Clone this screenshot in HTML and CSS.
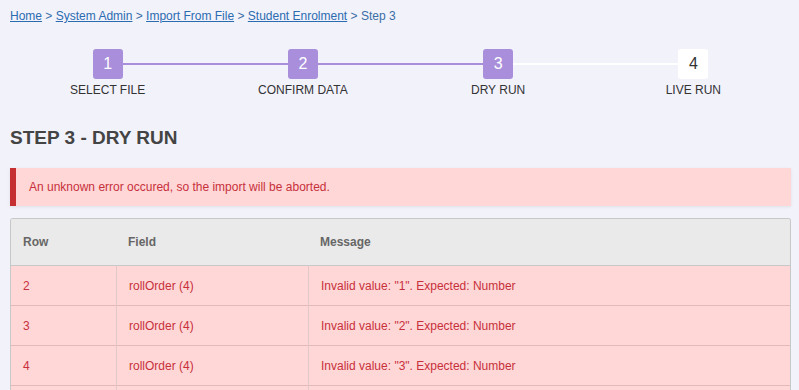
FILE: index.html
```html
<!DOCTYPE html>
<html lang="en">
<head>
    <meta charset="UTF-8">
    <meta name="viewport" content="width=device-width, initial-scale=1.0">
    <title>Import From File - Step 3</title>
    <link rel="stylesheet" href="styles.css">
</head>
<body>
    <div class="page">
        <div class="breadcrumb">
            <a href="#">Home</a> &gt; <a href="#">System Admin</a> &gt; <a href="#">Import From File</a> &gt; <a href="#">Student Enrolment</a> &gt; Step 3
        </div>

        <div class="steps">
            <div class="step done">
                <div class="step-num">1</div>
                <div class="step-label">Select File</div>
            </div>
            <div class="step done">
                <div class="step-num">2</div>
                <div class="step-label">Confirm Data</div>
            </div>
            <div class="step done">
                <div class="step-num">3</div>
                <div class="step-label">Dry Run</div>
            </div>
            <div class="step">
                <div class="step-num">4</div>
                <div class="step-label">Live Run</div>
            </div>
        </div>

        <h2 class="title">Step 3 - Dry Run</h2>

        <div class="alert">An unknown error occured, so the import will be aborted.</div>

        <table class="results">
            <thead>
                <tr>
                    <th class="col-row">Row</th>
                    <th class="col-field">Field</th>
                    <th>Message</th>
                </tr>
            </thead>
            <tbody>
                <tr>
                    <td>2</td>
                    <td>rollOrder (4)</td>
                    <td>Invalid value: "1". Expected: Number</td>
                </tr>
                <tr>
                    <td>3</td>
                    <td>rollOrder (4)</td>
                    <td>Invalid value: "2". Expected: Number</td>
                </tr>
                <tr>
                    <td>4</td>
                    <td>rollOrder (4)</td>
                    <td>Invalid value: "3". Expected: Number</td>
                </tr>
                <tr>
                    <td></td>
                    <td></td>
                    <td></td>
                </tr>
            </tbody>
        </table>
    </div>
</body>
</html>
```

FILE: styles.css
```css
body {
    margin: 0;
    background: #f2f2fb;
    color: #333;
    font-family: 'Liberation Sans', Arial, sans-serif;
    font-size: 12px;
}

.page {
    padding: 9px 8px 0 10px;
}

.breadcrumb {
    line-height: 14px;
    color: #3a6ea5;
}

.breadcrumb a {
    color: #2b6cb0;
    text-decoration: underline;
}

.steps {
    display: grid;
    grid-template-columns: repeat(4, 1fr);
    margin-top: 26px;
}

.step {
    position: relative;
    display: flex;
    flex-direction: column;
    align-items: center;
}

.step + .step::before {
    content: '';
    position: absolute;
    top: 14px;
    right: 50%;
    width: 100%;
    height: 2px;
    background: #fff;
}

.step.done + .step.done::before {
    background: #a98edb;
}

.step-num {
    position: relative;
    z-index: 1;
    width: 30px;
    height: 30px;
    line-height: 30px;
    text-align: center;
    border-radius: 3px;
    background: #fff;
    color: #333;
    font-size: 16px;
}

.step.done .step-num {
    background: #a98edb;
    color: #fff;
}

.step-label {
    margin-top: 4px;
    line-height: 14px;
    text-transform: uppercase;
}

.title {
    margin: 30px 0 0;
    font-size: 19px;
    line-height: 22px;
    text-transform: uppercase;
    color: #444;
}

.alert {
    margin-top: 19px;
    padding: 12px 13px 12px;
    line-height: 14px;
    background: #ffd7d7;
    border-left: 6px solid #c62f31;
    color: #c7303b;
    box-shadow: 0 1px 3px rgba(0, 0, 0, 0.08);
}

.results {
    width: 100%;
    margin-top: 12px;
    border-collapse: separate;
    border-spacing: 0;
    border: 1px solid #c8c8c8;
    border-bottom: none;
    border-radius: 3px 3px 0 0;
    overflow: hidden;
}

.results th {
    background: #eaeaea;
    color: #666;
    font-weight: bold;
    text-align: left;
    height: 46px;
    padding: 0 12px;
    border-bottom: 1px solid #c8c8c8;
}

.results td {
    background: #ffd7d7;
    color: #c7303b;
    height: 39px;
    padding: 0 12px;
    border-bottom: 1px solid #e2b9b9;
}

.results td + td {
    border-left: 1px solid #e2c9c9;
}

.col-row {
    width: 81px;
}

.col-field {
    width: 168px;
}
```
